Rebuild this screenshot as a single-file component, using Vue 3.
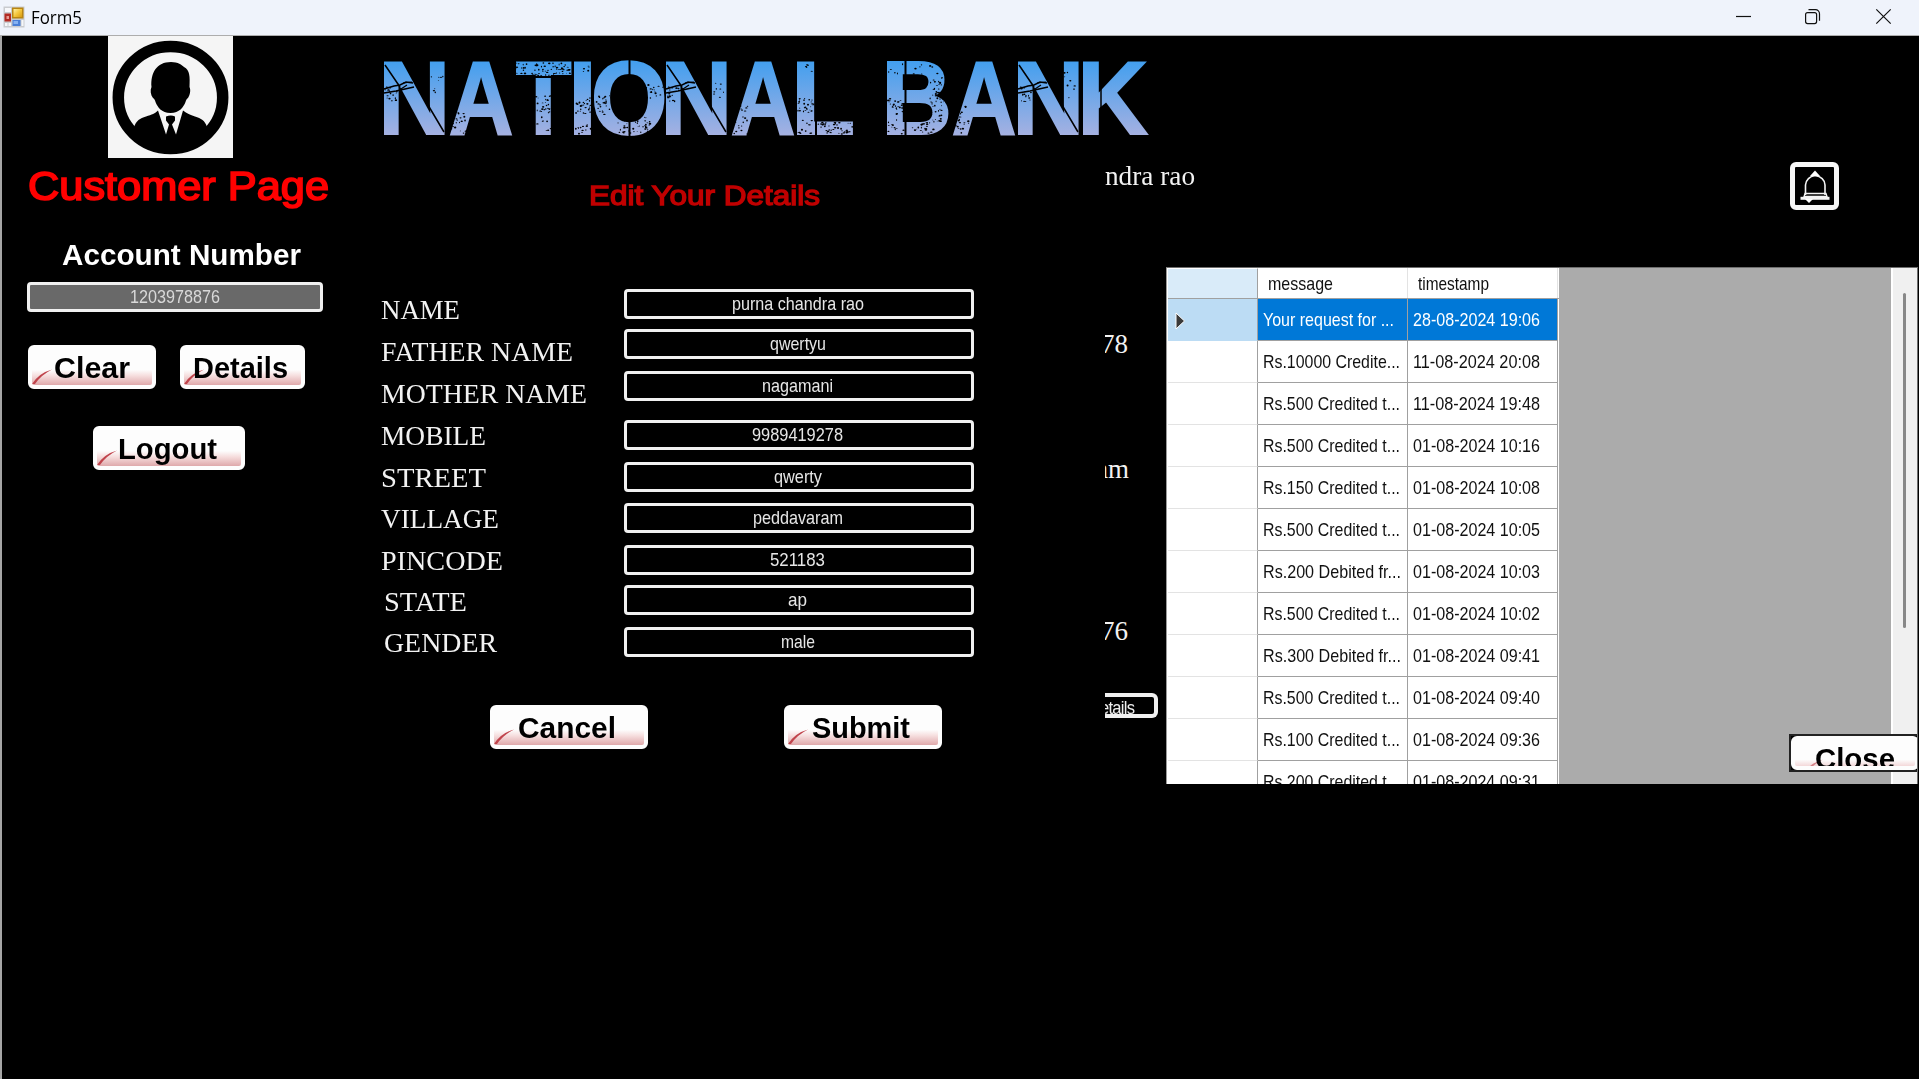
<script setup>
// Stretches a run of text horizontally so that it takes exactly the given width.
const vFit = {
  mounted(el, { value }) {
    const natural = el.getBoundingClientRect().width
    el.style.width = natural + 'px'
    el.style.transform = `scaleX(${value / natural})`
    el.style.marginRight = value - natural + 'px'
  },
}

const letters = [
  { c: 'N', x: 384, s: 0.96, b: 6 },
  { c: 'A', x: 448, s: 0.86, b: -1 },
  { c: 'T', x: 516, s: 0.89, b: 1 },
  { c: 'I', x: 574, s: 1, b: 6 },
  { c: 'O', x: 594, s: 0.95, b: 3.5 },
  { c: 'N', x: 666, s: 0.96, b: 6 },
  { c: 'A', x: 730, s: 0.86, b: -1 },
  { c: 'L', x: 797, s: 1.01, b: 6 },
  { c: '\u00a0', x: 860, s: 1, b: 0 },
  { c: 'B', x: 887, s: 0.94, b: 6 },
  { c: 'A', x: 951, s: 0.86, b: -1 },
  { c: 'N', x: 1018, s: 0.96, b: 6 },
  { c: 'K', x: 1083, s: 0.94, b: 6 },
].map((l, i, all) => ({ ...l, w: (all[i + 1]?.x ?? 1160) - l.x }))

// Worn paint: areas [x, y, width, height, specks] of the heading.
const worn = [
  [516, 63, 54, 13, 75], [536, 95, 17, 18, 32], [536, 115, 17, 18, 8],
  [575, 98, 16, 16, 28], [575, 64, 15, 10, 5], [575, 120, 16, 14, 12],
  [596, 95, 14, 20, 26], [617, 114, 36, 20, 62], [645, 84, 18, 14, 18],
  [385, 88, 12, 14, 14], [430, 72, 13, 26, 8], [450, 105, 16, 30, 26],
  [667, 88, 12, 14, 14], [712, 72, 13, 26, 8], [732, 105, 16, 30, 26],
  [798, 98, 16, 16, 28], [798, 64, 15, 10, 5], [798, 120, 16, 14, 12], [818, 122, 35, 12, 46],
  [888, 98, 16, 16, 28], [888, 64, 15, 10, 5], [888, 120, 16, 14, 12],
  [912, 64, 30, 14, 10], [930, 76, 17, 46, 60], [912, 122, 26, 12, 24],
  [953, 105, 16, 30, 26], [1019, 88, 12, 14, 14], [1064, 72, 13, 26, 8],
]
let seed = 11
const rnd = () => (seed = (seed * 16807) % 2147483647) / 2147483647
const specks = worn.flatMap(([x, y, w, h, n]) =>
  Array.from({ length: n }, () => ({
    x: x + rnd() * w, y: y + rnd() * h, rx: 0.4 + rnd() * 0.9, ry: 0.4 + rnd() * 0.6,
  })))

const labels = [
  { t: 'NAME', w: 79, gap: 0 }, { t: 'FATHER NAME', w: 192, gap: 12 },
  { t: 'MOTHER NAME', w: 206, gap: 12 }, { t: 'MOBILE', w: 105, gap: 12 },
  { t: 'STREET', w: 105, gap: 12 }, { t: 'VILLAGE', w: 118, gap: 11 },
  { t: 'PINCODE', w: 122, gap: 12 }, { t: 'STATE', w: 83, gap: 11, inset: true },
  { t: 'GENDER', w: 113, gap: 11, inset: true },
]
const fields = [
  { t: 'purna chandra rao', w: 132, gap: 0 }, { t: 'qwertyu', w: 56, gap: 10 },
  { t: 'nagamani', w: 71, gap: 12 }, { t: '9989419278', w: 91, gap: 19 },
  { t: 'qwerty', w: 48, gap: 12 }, { t: 'peddavaram', w: 90, gap: 11 },
  { t: '521183', w: 55, gap: 12 }, { t: 'ap', w: 19, gap: 10 }, { t: 'male', w: 34, gap: 12 },
]
const rows = [
  ['Your request for ...', '28-08-2024 19:06', 131],
  ['Rs.10000 Credite...', '11-08-2024 20:08', 137],
  ['Rs.500 Credited t...', '11-08-2024 19:48', 137],
  ['Rs.500 Credited t...', '01-08-2024 10:16', 137],
  ['Rs.150 Credited t...', '01-08-2024 10:08', 137],
  ['Rs.500 Credited t...', '01-08-2024 10:05', 137],
  ['Rs.200 Debited fr...', '01-08-2024 10:03', 138],
  ['Rs.500 Credited t...', '01-08-2024 10:02', 137],
  ['Rs.300 Debited fr...', '01-08-2024 09:41', 138],
  ['Rs.500 Credited t...', '01-08-2024 09:40', 137],
  ['Rs.100 Credited t...', '01-08-2024 09:36', 137],
  ['Rs.200 Credited t...', '01-08-2024 09:31', 137],
]
</script>

<template>
  <div class="window">
    <header class="titlebar">
      <svg class="appicon" width="22" height="22" viewBox="0 0 22 22">
        <defs>
          <linearGradient id="gold" x1="0" y1="0" x2="1" y2="1"><stop offset="0" stop-color="#fff0a0" /><stop offset=".5" stop-color="#f5c63c" /><stop offset="1" stop-color="#d79a10" /></linearGradient>
        </defs>
        <rect x=".5" y=".5" width="21" height="21" fill="#c9cbcf" />
        <rect x="2" y="2" width="6" height="4" fill="#f6f7fa" />
        <rect x="1.500" y="7.500" width="6.500" height="8" fill="#b32a22" /><rect x="3.500" y="10" width="2.500" height="3" fill="#e79a92" />
        <rect x="9" y="1.500" width="11.500" height="11" fill="#b98512" /><rect x="10.500" y="3" width="8.500" height="8" fill="url(#gold)" />
        <rect x="9.500" y="14" width="8" height="6" fill="#4a7fd6" /><rect x="10.500" y="15" width="4.500" height="3" fill="#86b2f2" />
        <rect x="2" y="17" width="2.500" height="3" fill="#f6f7fa" /><rect x="5.500" y="17" width="2.500" height="3" fill="#f6f7fa" /><rect x="18.500" y="14" width="2" height="6" fill="#f6f7fa" />
      </svg>
      <span class="caption"><span v-fit="51" class="fit">Form5</span></span>
      <svg class="winctl" width="160" height="20" viewBox="0 0 160 20" fill="none" stroke="#111" stroke-width="1.200">
        <path d="M0 9.500h15" />
        <rect x="69.600" y="5.600" width="11" height="11" rx="2" />
        <path d="M72.500 2.700h7a4 4 0 0 1 4 4v7" />
        <path d="M140.300 2.300l14.400 14.400M154.700 2.300l-14.400 14.400" />
      </svg>
    </header>

    <div class="body">
      <aside class="sidebar">
        <svg class="avatar" width="125" height="122" viewBox="0 0 125 122">
          <rect width="125" height="122" fill="#f5f5f5" />
          <ellipse cx="62.500" cy="61.500" rx="52.200" ry="51" fill="none" stroke="#000" stroke-width="11.500" />
          <path d="M63 26c7 0 11 3 13 5 6 3 6 10 5.500 20 1.500 3 .5 8-1.500 11-1.500 1-2 2-2.500 4-2 5-6 11-15 11s-13-6-15-11c-.5-2-1-3-2.500-4-2.500-3-3-8-1.500-11-1-14 5-25 19.500-25z" />
          <path d="M26 91c2-6 6-9 12-10.500 6-2 9-3 12-6l8 24 3-10-3-4v-4q5-2 9 0v4l-3 4 4 10 7-24c4 3 7 4 12 6 6 2 10 4 12 10.500C90 105 80 112 62.500 112S35 105 26 91z" />
        </svg>
        <div class="customer"><span v-fit="301" class="fit">Customer Page</span></div>
        <div class="account"><span v-fit="239" class="fit">Account Number</span></div>
        <div class="field number"><span v-fit="90" class="fit">1203978876</span></div>
        <div class="pair">
          <button class="btn clear"><span v-fit="76" class="fit">Clear</span><svg width="24" height="16" viewBox="0 0 24 16"><path d="M0 15Q7 4 20 .5Q9 6 3 15z" /></svg></button>
          <button class="btn details"><span v-fit="95" class="fit">Details</span><svg width="24" height="16" viewBox="0 0 24 16"><path d="M0 15Q7 4 20 .5Q9 6 3 15z" /></svg></button>
        </div>
        <button class="btn logout"><span v-fit="99" class="fit">Logout</span><svg width="24" height="16" viewBox="0 0 24 16"><path d="M0 15Q7 4 20 .5Q9 6 3 15z" /></svg></button>
      </aside>

      <main class="main">
        <div class="banner">
          <h1><span v-for="(l, i) in letters" :key="i" class="letter" :style="{ width: l.w + 'px', transform: `scaleX(${l.s})`, textIndent: -l.b + 'px' }">{{ l.c }}</span></h1>
          <svg class="wear" width="770" height="80" viewBox="382 59 770 80">
            <g v-for="x in [384, 666, 1018]" :key="x" fill="none" stroke="#000" :transform="`translate(${x} 62)`">
              <path d="M1 3L16 25M44 43L60 70" stroke-width="1.500" />
              <path d="M0 27l10-3 6-1 6-3 7 1M0 31l12-2 18-4" stroke-width="1.500" />
              <path d="M2 25l5 1M19 21l9-1M17 27l6-4" stroke-width="1.200" />
            </g>
            <path d="M629.500 60v16M629.500 120v18M905.500 60v76M516 77h54M816 118v20" stroke="#000" stroke-width="2" />
            <path d="M1101 60v78" stroke="#000" stroke-width="1.500" />
            <ellipse v-for="(s, i) in specks" :key="i" :cx="s.x" :cy="s.y" :rx="s.rx" :ry="s.ry" />
          </svg>
        </div>

        <div class="content">
          <section class="edit">
            <h2><span v-fit="231" class="fit">Edit Your Details</span></h2>
            <div class="form">
              <div class="labels">
                <div v-for="l in labels" :key="l.t" class="label" :class="{ inset: l.inset }" :style="{ marginTop: l.gap + 'px' }"><span v-fit="l.w" class="fit">{{ l.t }}</span></div>
              </div>
              <div class="fields">
                <div v-for="f in fields" :key="f.t" class="field" :style="{ marginTop: f.gap + 'px' }"><span v-fit="f.w" class="fit">{{ f.t }}</span></div>
              </div>
            </div>
            <div class="actions">
              <button class="btn wide"><span v-fit="98" class="fit">Cancel</span><svg width="24" height="16" viewBox="0 0 24 16"><path d="M0 15Q7 4 20 .5Q9 6 3 15z" /></svg></button>
              <button class="btn wide"><span v-fit="98" class="fit">Submit</span><svg width="24" height="16" viewBox="0 0 24 16"><path d="M0 15Q7 4 20 .5Q9 6 3 15z" /></svg></button>
            </div>
          </section>

          <section class="right">
            <div class="topline">
              <span class="cut name"><span v-fit="90" class="fit">ndra rao</span></span>
              <div class="bell">
                <svg width="39" height="38" viewBox="0 0 39 38" fill="none" stroke="#f4f4f4" stroke-width="1.600">
                  <path d="M10.500 28V18q1-8 9.500-9.500Q29.500 10 30 18v10" />
                  <path d="M15 9l5-5.500L25 9z" fill="#fff" stroke="none" />
                  <path d="M10 26.500h21l1 3H9z" stroke-width="1.300" />
                  <path d="M5.500 31.300h29" stroke-width="3" />
                  <path d="M10 32h8l-4 4z" fill="#fff" stroke="none" />
                </svg>
              </div>
            </div>
            <div class="lower">
              <div class="behind">
                <div class="cut seventy8">78</div>
                <div class="cut am"><span>am</span></div>
                <div class="cut seventy6">76</div>
                <div class="peek"><span>etails</span></div>
              </div>
              <div class="grid">
                <div class="table">
                  <div class="thead"><div class="rh"></div><div class="c"><span v-fit="65" class="fit">message</span></div><div class="c"><span v-fit="71" class="fit">timestamp</span></div></div>
                  <div v-for="(r, i) in rows" :key="i" class="tr" :class="{ sel: i === 0 }">
                    <div class="rh"><svg v-if="i === 0" width="11" height="18" viewBox="0 0 11 18"><path d="M1 1v16l8.500-8z" fill="#3a3a3a" stroke="#fff" stroke-width="1" /></svg></div>
                    <div class="c"><span v-fit="r[2]" class="fit">{{ r[0] }}</span></div>
                    <div class="c"><span v-fit="127" class="fit">{{ r[1] }}</span></div>
                  </div>
                </div>
                <div class="scroll"><div class="thumb"></div></div>
                <div class="close"><button class="btn"><span v-fit="80" class="fit">Close</span><svg width="24" height="16" viewBox="0 0 24 16"><path d="M0 15Q7 4 20 .5Q9 6 3 15z" /></svg></button></div>
              </div>
            </div>
          </section>
        </div>
      </main>
    </div>
  </div>
</template>

<style>
body { margin: 0; background: #000; overflow: hidden; }
</style>

<style scoped>
* { box-sizing: border-box; }
.window { width: 1919px; height: 1079px; display: flex; flex-direction: column; background: #000; font-family: "Liberation Sans", Arial, sans-serif; overflow: hidden; }
.fit { display: inline-block; white-space: nowrap; transform-origin: left center; flex: none; }
.titlebar { height: 36px; flex: none; background: #eff3fb; border-bottom: 1px solid #adadad; display: flex; align-items: flex-start; padding: 6px 23px 0 3px; }
.caption { margin-left: 6px; font: 17.500px/22px "Open Sans", "Noto Sans", sans-serif; color: #000; }
.winctl { margin: 1px 0 0 auto; }
.body { flex: 1; display: flex; border-left: 2px solid #a6a6a6; min-height: 0; }
.sidebar { width: 358px; flex: none; display: flex; flex-direction: column; align-items: flex-start; }
.avatar { margin-left: 106px; display: block; }
.customer { margin: 6px 0 0 26px; color: #f00; font-size: 40px; line-height: 44px; height: 44px; -webkit-text-stroke: 1.700px #f00; }
.account { margin: 32px 0 0 60px; color: #fff; font-weight: 700; font-size: 29px; line-height: 30px; height: 30px; }
.field { height: 30px; border: 3px solid #f0f0f0; border-radius: 4px; color: #e6e6e6; font-size: 19px; line-height: 24px; display: flex; justify-content: center; padding-right: 3px; }
.number { width: 296px; margin: 12px 0 0 25px; background: #696969; color: #d9d9d9; padding-right: 1px; }
.pair { display: flex; gap: 24px; margin: 33px 0 0 26px; }
.btn { position: relative; display: flex; align-items: flex-start; height: 44px; border: 4px solid #fdfdfd; border-radius: 6px; background: linear-gradient(#fdfdfd 0, #fdfdfd 58%, #f6dede 74%, #dfa9ab 100%); font: 700 29px/39px "Liberation Sans", Arial, sans-serif; color: #000; text-align: left; padding: 0; overflow: hidden; white-space: nowrap; }
.btn .fit { position: relative; z-index: 1; }
.btn svg { position: absolute; left: 0; bottom: 0; fill: #c0444c; }
.clear { width: 128px; padding-left: 22px; }
.details { width: 125px; padding-left: 9px; }
.logout { width: 152px; margin: 37px 0 0 91px; padding-left: 21px; }
.wide { width: 158px; padding-left: 24px; }

.main { flex: 1; display: flex; flex-direction: column; min-width: 0; }
.banner { height: 122px; flex: none; padding: 9px 0 0 24px; position: relative; }
h1 { margin: 0; height: 107px; font-weight: 700; white-space: nowrap; font-size: 0; }
.letter { display: inline-block; vertical-align: top; box-sizing: content-box; font-size: 104px; line-height: 107px; transform-origin: left center; padding-right: 24px; margin-right: -24px; color: transparent; -webkit-text-stroke: 2px transparent; background: linear-gradient(#429fef 16px, #a6b1e1 91px); background-clip: text; -webkit-background-clip: text; }
.wear { position: absolute; left: 22px; top: 23px; }
.content { display: flex; flex: 1; min-height: 0; }
.edit { width: 745px; flex: none; }
h2 { margin: 20px 0 0 229px; height: 34px; font-size: 28.500px; line-height: 34px; font-weight: 400; color: #c00000; -webkit-text-stroke: 1.400px #c00000; }
.form { display: flex; margin-top: 77px; }
.labels { width: 264px; padding: 6px 0 0 21px; }
.label { height: 30px; line-height: 30px; font-family: "Liberation Serif", "Times New Roman", serif; font-size: 26.700px; color: #f2f2f2; }
.inset { padding-left: 3px; }
.fields { width: 350px; }
.actions { display: flex; gap: 136px; margin: 47px 0 0 130px; }

.right { flex: 1; display: flex; flex-direction: column; min-width: 0; }
.topline { height: 109px; flex: none; display: flex; justify-content: space-between; padding-right: 80px; }
.cut { font-family: "Liberation Serif", "Times New Roman", serif; font-size: 27px; line-height: 30px; color: #f2f2f2; overflow: hidden; height: 30px; white-space: nowrap; }
.name { margin-top: 3px; height: 36px; }
.bell { margin-top: 4px; width: 49px; height: 48px; border: 5px solid #f7f7f7; border-radius: 6px; }
.bell svg { display: block; }
.lower { display: flex; }
.behind { width: 61px; flex: none; }
.seventy8 { margin-top: 62px; text-indent: -4px; }
.am { margin-top: 95px; }
.am span { display: block; margin-left: -9px; }
.seventy6 { margin-top: 132px; text-indent: -4px; }
.peek { margin-top: 47px; width: 53px; height: 25px; border: 4px solid #f0f0f0; border-left: 0; border-radius: 0 6px 6px 0; overflow: hidden; font-size: 18px; line-height: 22px; color: #eee; letter-spacing: -.8px; }
.peek span { display: block; transform: scaleX(.92); transform-origin: left; margin-left: -5px; }
.grid { width: 752px; height: 517px; flex: none; position: relative; display: flex; background: #ababab; border: 1px solid #6e6e6e; border-left-color: #999; border-bottom: 0; overflow: hidden; font-size: 19px; color: #111; }
.table { width: 392px; flex: none; background: #fff; padding-left: 1px; }
.thead, .tr { display: flex; }
.thead { height: 31px; border-bottom: 1px solid #a0a0a0; }
.rh { width: 90px; flex: none; border-right: 1px solid #a0a0a0; border-bottom: 1px solid #e3e3e3; }
.thead .rh { background: #d9ebf9; border-bottom: 0; border-top: 1px solid #fff; }
.c { width: 150px; flex: none; border-right: 1px solid #a0a0a0; border-bottom: 1px solid #a0a0a0; padding-left: 5px; line-height: 41px; }
.c .fit { vertical-align: top; }
.thead .c { line-height: 32px; border-bottom: 0; border-right-color: #e3e3e3; padding-left: 10px; }
.tr { height: 42px; flex: none; }
.sel .c { background: #0078d7; color: #fff; }
.sel .rh { background: #bcdcf4; padding: 13px 0 0 7px; border-bottom-color: #bcdcf4; }
.scroll { margin-left: auto; width: 26px; background: #f0f0f0; border-left: 2px solid #fff; padding: 25px 0 0 10px; }
.thumb { width: 3px; height: 335px; background: #888; border-radius: 2px; }
.close { position: absolute; left: 622px; top: 466px; width: 130px; height: 38px; background: #000; border: 2px solid #222; border-right: 0; }
.close .btn { width: 128px; height: 34px; padding-left: 20px; background: linear-gradient(#fdfdfd 75%, #f3d8d9); line-height: 39px; }
.close .btn svg { left: 8px; bottom: -9px; opacity: .6; }
</style>
